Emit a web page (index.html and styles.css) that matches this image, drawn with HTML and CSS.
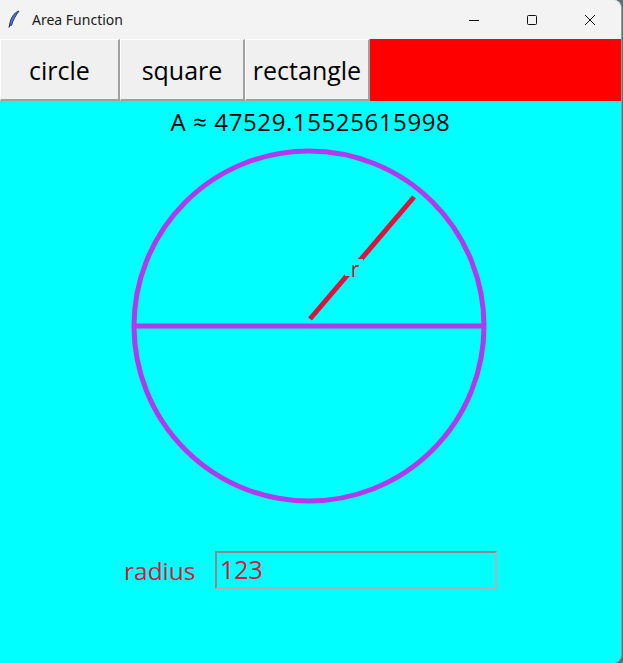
FILE: index.html
```html
<!DOCTYPE html>
<html>
<head>
<meta charset="utf-8">
<link rel="stylesheet" href="styles.css">
</head>
<body>
<div class="window">
  <div class="titlebar">
    <svg class="app-icon" width="14" height="18" viewBox="0 0 14 18">
      <path d="M12 1 C7 2.5 3.5 8 2.5 15 L4.5 15.5 C6 10 9 5 12 1 Z" fill="#4a7bd0" stroke="#1d2e52" stroke-width="0.9"/>
      <path d="M3 15 L1.8 17.5" stroke="#222" stroke-width="1.1"/>
    </svg>
    <span class="title">Area Function</span>
    <div class="controls">
      <svg class="ctl" width="12" height="12" viewBox="0 0 12 12"><path d="M1 6.5 H11" stroke="#111" stroke-width="1"/></svg>
      <svg class="ctl" width="12" height="12" viewBox="0 0 12 12"><rect x="1.5" y="1.5" width="9" height="9" rx="1" fill="none" stroke="#111" stroke-width="1"/></svg>
      <svg class="ctl" width="12" height="12" viewBox="0 0 12 12"><path d="M1 1 L11 11 M11 1 L1 11" stroke="#111" stroke-width="1"/></svg>
    </div>
  </div>
  <div class="toolbar">
    <button class="btn btn-circle">circle</button>
    <button class="btn btn-square">square</button>
    <button class="btn btn-rect">rectangle</button>
    <div class="red-fill"></div>
  </div>
  <div class="main">
    <div class="area">A ≈ 47529.15525615998</div>
    <svg class="canvas" width="621" height="370" viewBox="0 141 621 370">
      <circle cx="309" cy="326" r="175" fill="none" stroke="#b23aee" stroke-width="5"/>
      <line x1="134" y1="326" x2="484" y2="326" stroke="#b23aee" stroke-width="5"/>
      <line x1="310" y1="319" x2="414" y2="197" stroke="#dc143c" stroke-width="5"/>
      <rect x="345" y="259" width="18" height="17" fill="#00ffff"/>
      <text x="355" y="277" text-anchor="middle" class="r-label">r</text>
    </svg>
    <div class="input-row">
      <span class="radius-label">radius</span>
      <div class="entry">123</div>
    </div>
  </div>
</div>
</body>
</html>
```
FILE: styles.css
```css
html, body {
  margin: 0;
  padding: 0;
}
body {
  width: 623px;
  height: 663px;
  background: #6b6b6b;
  overflow: hidden;
  font-family: "Open Sans", "Noto Sans", sans-serif;
}
.window {
  width: 621px;
  height: 663px;
  background: #00ffff;
  border-top-right-radius: 8px;
  border-bottom-right-radius: 8px;
  overflow: hidden;
  display: flex;
  flex-direction: column;
  border-right: 1px solid #9a9a9a;
}
.titlebar {
  height: 39px;
  background: #f3f3f3;
  display: flex;
  align-items: center;
  flex-shrink: 0;
}
.app-icon {
  margin-left: 7px;
  margin-right: 11px;
  margin-top: -2px;
}
.title {
  font-family: "Noto Sans", "Open Sans", sans-serif;
  font-size: 14px;
  color: #1a1a1a;
  margin-top: -1px;
}
.controls {
  margin-left: auto;
  display: flex;
  gap: 46px;
  margin-right: 25px;
}
.ctl {
  display: block;
}
.toolbar {
  display: flex;
  height: 62px;
  flex-shrink: 0;
}
.btn {
  margin: 0;
  padding: 1px 0 0 0;
  background: #f0f0f0;
  border-style: solid;
  border-width: 1px 2px 2px 1px;
  border-color: #ffffff #a0a0a0 #a0a0a0 #ffffff;
  font-family: "Open Sans", "Noto Sans", sans-serif;
  font-size: 25px;
  color: #000;
  height: 62px;
  box-sizing: border-box;
  white-space: nowrap;
}
.btn-circle { width: 120px; }
.btn-square { width: 125px; }
.btn-rect { width: 125px; }
.red-fill {
  flex: 1;
  background: #ff0000;
}
.main {
  flex: 1;
  display: flex;
  flex-direction: column;
}
.area {
  height: 40px;
  text-align: center;
  font-size: 24px;
  letter-spacing: 0.6px;
  line-height: 42px;
  color: #000;
  box-sizing: border-box;
}
.canvas {
  display: block;
}
.r-label {
  font-family: "Open Sans", sans-serif;
  font-size: 21px;
  fill: #c8102e;
}
.input-row {
  display: flex;
  align-items: center;
  margin-top: 40px;
  padding-left: 124px;
}
.radius-label {
  color: #dc143c;
  font-size: 24.5px;
  width: 91px;
}
.entry {
  width: 282px;
  height: 38px;
  box-sizing: border-box;
  border: 2px solid #8a8a8a;
  border-right-color: #b0b0b0;
  border-bottom-color: #b0b0b0;
  color: #dc143c;
  font-size: 25px;
  line-height: 33px;
  padding-left: 3px;
}
```
